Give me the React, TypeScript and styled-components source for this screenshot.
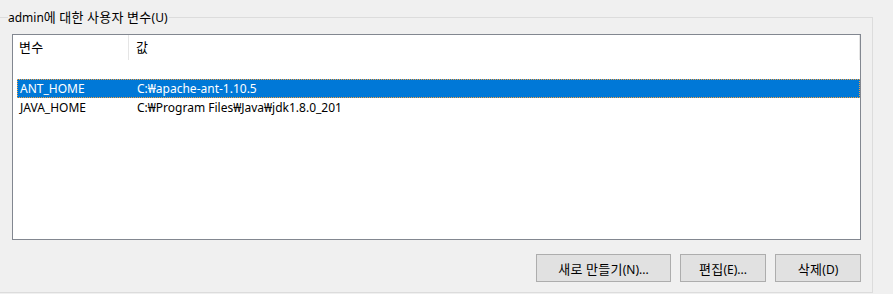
import React from "react";
import styled, { createGlobalStyle } from "styled-components";

const Global = createGlobalStyle`
  html, body { margin: 0; padding: 0; background: #f0f0f0; }
  body {
    width: 893px; height: 294px; overflow: hidden;
    font-family: "Noto Sans", "Noto Sans CJK KR", sans-serif;
    font-size: 12px; color: #000;
  }
`;

const Page = styled.div`
  width: 893px;
  height: 294px;
  padding-top: 17px;
  box-sizing: border-box;
`;

const GroupBox = styled.div`
  position: relative;
  width: 873px;
  height: 276px;
  box-sizing: border-box;
  border: 1px solid #dcdcdc;
  border-left: none;
  padding: 16px 0 0 12px;
  display: flex;
  flex-direction: column;
`;

const Legend = styled.div`
  position: absolute;
  top: -10px;
  left: 8px;
  height: 18px;
  line-height: 18px;
  background: #f0f0f0;
  padding-right: 1px;
  white-space: nowrap;
`;

const Ko = styled.span`
  font-family: "Noto Sans CJK KR", sans-serif;
  font-size: 13px;
  letter-spacing: 0.3px;
`;

const ListBox = styled.div`
  position: relative;
  width: 849px;
  height: 206px;
  box-sizing: border-box;
  border: 1px solid #828790;
  background: #fff;
  display: flex;
  flex-direction: column;
`;

const Header = styled.div`
  display: flex;
  height: 25px;
  flex-shrink: 0;
`;

const HeaderCell = styled.div<{ $w?: number }>`
  ${(p) => (p.$w ? `width: ${p.$w}px;` : "flex: 1;")}
  box-sizing: border-box;
  padding-left: ${(p) => (p.$w ? 6 : 7)}px;
  border-right: 1px solid #e5e5e5;
  line-height: 23px;
  white-space: nowrap;
`;

const Rows = styled.div`
  padding: 19px 0 0 4px;
  display: flex;
  flex-direction: column;
`;

const Row = styled.div<{ $selected?: boolean }>`
  display: flex;
  height: 19px;
  box-sizing: border-box;
  line-height: 17px;
  white-space: nowrap;
  background: ${(p) => (p.$selected ? "#0078d7" : "transparent")};
  color: ${(p) => (p.$selected ? "#fff" : "#000")};
  border: 1px ${(p) => (p.$selected ? "dotted #f5a142" : "solid transparent")};
`;

const Cell = styled.div<{ $w?: number }>`
  ${(p) => (p.$w ? `width: ${p.$w}px;` : "flex: 1;")}
  padding-left: ${(p) => (p.$w ? 2 : 7)}px;
  box-sizing: border-box;
`;

const Buttons = styled.div`
  display: flex;
  justify-content: flex-end;
  gap: 9px;
  width: 849px;
  margin-top: 14px;
`;

const Button = styled.button<{ $w: number }>`
  width: ${(p) => p.$w}px;
  height: 28px;
  box-sizing: border-box;
  background: #e1e1e1;
  border: 1px solid #adadad;
  font-family: "Noto Sans", "Noto Sans CJK KR", sans-serif;
  font-size: 12px;
  color: #000;
  padding: 0;
  margin: 0;
`;

export default function App() {
  return (
    <>
      <Global />
      <Page>
        <GroupBox>
          <Legend>
            admin<Ko>에 대한 사용자 변수</Ko>(U)
          </Legend>
          <ListBox>
            <Header>
              <HeaderCell $w={116}>
                <Ko>변수</Ko>
              </HeaderCell>
              <HeaderCell>
                <Ko>값</Ko>
              </HeaderCell>
            </Header>
            <Rows>
              <Row $selected>
                <Cell $w={112}>ANT_HOME</Cell>
                <Cell>C:₩apache-ant-1.10.5</Cell>
              </Row>
              <Row>
                <Cell $w={112}>JAVA_HOME</Cell>
                <Cell>C:₩Program Files₩Java₩jdk1.8.0_201</Cell>
              </Row>
            </Rows>
          </ListBox>
          <Buttons>
            <Button $w={135}>
              <Ko>새로 만들기</Ko>(N)...
            </Button>
            <Button $w={86}>
              <Ko>편집</Ko>(E)...
            </Button>
            <Button $w={86}>
              <Ko>삭제</Ko>(D)
            </Button>
          </Buttons>
        </GroupBox>
      </Page>
    </>
  );
}
